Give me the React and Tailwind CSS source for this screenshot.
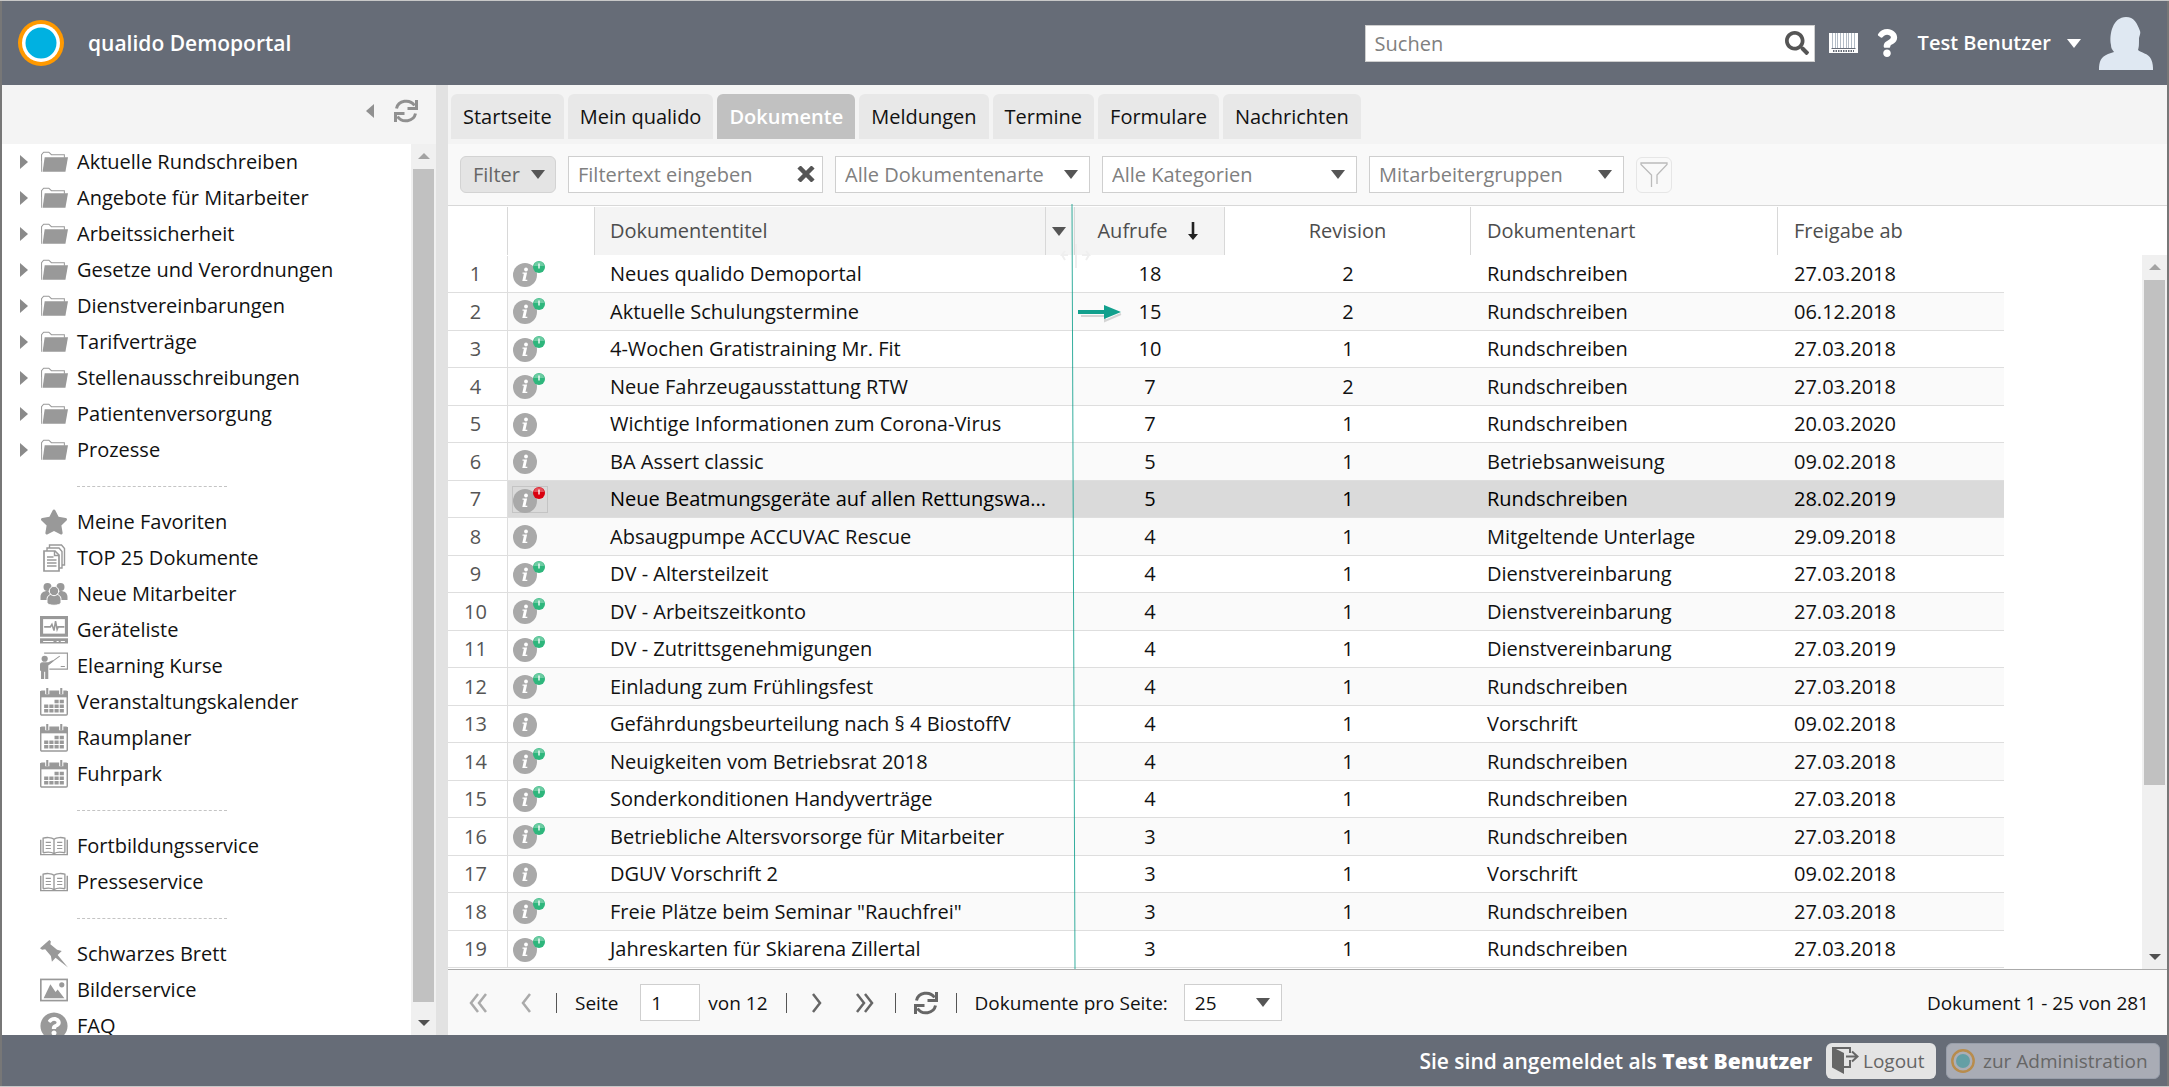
import { useState } from "react";
import { FaSearch, FaQuestion, FaStar, FaQuestionCircle } from "react-icons/fa";

const folders = [
  "Aktuelle Rundschreiben",
  "Angebote für Mitarbeiter",
  "Arbeitssicherheit",
  "Gesetze und Verordnungen",
  "Dienstvereinbarungen",
  "Tarifverträge",
  "Stellenausschreibungen",
  "Patientenversorgung",
  "Prozesse",
];

const linkGroups = [
  [
    { label: "Meine Favoriten", icon: StarIcon },
    { label: "TOP 25 Dokumente", icon: PagesIcon },
    { label: "Neue Mitarbeiter", icon: PeopleIcon },
    { label: "Geräteliste", icon: DeviceIcon },
    { label: "Elearning Kurse", icon: TeacherIcon },
    { label: "Veranstaltungskalender", icon: CalendarIcon },
    { label: "Raumplaner", icon: CalendarIcon },
    { label: "Fuhrpark", icon: CalendarIcon },
  ],
  [
    { label: "Fortbildungsservice", icon: BookIcon },
    { label: "Presseservice", icon: BookIcon },
  ],
  [
    { label: "Schwarzes Brett", icon: PinIcon },
    { label: "Bilderservice", icon: ImageIcon },
    { label: "FAQ", icon: FaqIcon },
  ],
];

const tabs = ["Startseite", "Mein qualido", "Dokumente", "Meldungen", "Termine", "Formulare", "Nachrichten"];

// title, views, revision, type, release date, badge
const documents = [
  ["Neues qualido Demoportal", 18, 2, "Rundschreiben", "27.03.2018", "green"],
  ["Aktuelle Schulungstermine", 15, 2, "Rundschreiben", "06.12.2018", "green"],
  ["4-Wochen Gratistraining Mr. Fit", 10, 1, "Rundschreiben", "27.03.2018", "green"],
  ["Neue Fahrzeugausstattung RTW", 7, 2, "Rundschreiben", "27.03.2018", "green"],
  ["Wichtige Informationen zum Corona-Virus", 7, 1, "Rundschreiben", "20.03.2020", null],
  ["BA Assert classic", 5, 1, "Betriebsanweisung", "09.02.2018", null],
  ["Neue Beatmungsgeräte auf allen Rettungswa...", 5, 1, "Rundschreiben", "28.02.2019", "red"],
  ["Absaugpumpe ACCUVAC Rescue", 4, 1, "Mitgeltende Unterlage", "29.09.2018", null],
  ["DV - Altersteilzeit", 4, 1, "Dienstvereinbarung", "27.03.2018", "green"],
  ["DV - Arbeitszeitkonto", 4, 1, "Dienstvereinbarung", "27.03.2018", "green"],
  ["DV - Zutrittsgenehmigungen", 4, 1, "Dienstvereinbarung", "27.03.2019", "green"],
  ["Einladung zum Frühlingsfest", 4, 1, "Rundschreiben", "27.03.2018", "green"],
  ["Gefährdungsbeurteilung nach § 4 BiostoffV", 4, 1, "Vorschrift", "09.02.2018", null],
  ["Neuigkeiten vom Betriebsrat 2018", 4, 1, "Rundschreiben", "27.03.2018", "green"],
  ["Sonderkonditionen Handyverträge", 4, 1, "Rundschreiben", "27.03.2018", "green"],
  ["Betriebliche Altersvorsorge für Mitarbeiter", 3, 1, "Rundschreiben", "27.03.2018", "green"],
  ["DGUV Vorschrift 2", 3, 1, "Vorschrift", "09.02.2018", null],
  ["Freie Plätze beim Seminar \"Rauchfrei\"", 3, 1, "Rundschreiben", "27.03.2018", "green"],
  ["Jahreskarten für Skiarena Zillertal", 3, 1, "Rundschreiben", "27.03.2018", "green"],
];

function StarIcon() {
  return <FaStar className="w-7 h-7" />;
}

function FaqIcon() {
  return <FaQuestionCircle className="w-7 h-7" />;
}

function FolderIcon() {
  return (
    <svg viewBox="0 0 27 22" className="w-7 h-6" fill="none">
      <path d="M1.5 19V4l2-2.5h5L11 4h12.5v3" stroke="#999" />
      <path d="M4.5 6.5H27L24.500 20.500H2.500z" fill="#999" />
      <path d="M1.500 20.500V10" stroke="#aaa" />
    </svg>
  );
}

function PagesIcon() {
  return (
    <svg viewBox="0 0 27 28" className="w-7 h-7" fill="#fff" stroke="#999" strokeWidth="1.4">
      <path d="M9 1h12l3 3.500V21H9z" />
      <path d="M6.500 4h12l3 3.500V24h-15z" />
      <path d="M3.500 7h11l4 4v16h-15z" strokeWidth="1.700" />
      <path d="M14 7v4.500h4.500M6.500 13H13M6.500 16h9.500M6.500 19h9.500M6.500 22h9.500" fill="none" />
    </svg>
  );
}

function PeopleIcon() {
  return (
    <svg viewBox="0 0 27 24" className="w-7 h-6" fill="currentColor">
      <circle cx="7" cy="5" r="4" />
      <circle cx="20" cy="5" r="4" />
      <path d="M0 18v-3c0-4 3-6 7-6s4 9 4 9zM27 18v-3c0-4-3-6-7-6s-4 9-4 9z" />
      <g stroke="#fff" strokeWidth="1">
        <path d="M6.500 21v-3.500c0-4 3-5.500 7-5.500s7 1.500 7 5.500V21c-2 3-12 3-14 0z" />
        <circle cx="13.500" cy="9" r="4.700" />
      </g>
    </svg>
  );
}

function DeviceIcon() {
  return (
    <svg viewBox="0 0 27 27" className="w-7 h-7" fill="none" stroke="currentColor">
      <rect x="1.500" y="1.500" width="24" height="17" strokeWidth="3" />
      <path d="M4 10.500h6l1.500-2.500 2 6L15 5l1.500 8 1-2.500h6" strokeWidth="1.500" />
      <path d="M0 21.500h27v5H0z" fill="currentColor" stroke="none" />
      <path d="M3 24.500h10M16 24.500h2M20 24.500h4" stroke="#fff" />
    </svg>
  );
}

function TeacherIcon() {
  return (
    <svg viewBox="0 0 27 27" className="w-7 h-7" fill="none" stroke="currentColor">
      <path d="M4 1h22.500v15.500H9" strokeWidth="1.200" />
      <path d="M20 14h4M8 12l11-8" />
      <circle cx="4.500" cy="6.500" r="3" fill="currentColor" stroke="none" />
      <path d="M0 12c0-2 2-2 4-2h4l4-2 1 1-5 4v13H5v-7H4v7H1v-8H0z" fill="currentColor" stroke="none" />
    </svg>
  );
}

function CalendarIcon() {
  return (
    <svg viewBox="0 0 27 27" className="w-7 h-7" fill="none">
      <rect x="0.700" y="3" width="25.600" height="23" rx="1" stroke="#999" strokeWidth="1.400" />
      <path d="M0 3h27v6H0z" fill="#999" />
      <path d="M7 0v6M20.500 0v6" stroke="#fff" strokeWidth="4" />
      <path d="M7 0v6M20.500 0v6" stroke="#999" strokeWidth="2" />
      <path d="M14 13h9.500" stroke="#999" strokeWidth="3.400" strokeDasharray="4 1" />
      <path d="M4 17.500h19.500M4 22h19.500" stroke="#999" strokeWidth="3.400" strokeDasharray="4 1" />
    </svg>
  );
}

function BookIcon() {
  return (
    <svg viewBox="0 0 27 18" className="w-7 h-5" fill="none" stroke="#999">
      <path d="M0.700 3v14.300h25.600V3" strokeWidth="1.400" />
      <path d="M3 15.500V1.500c3-1 8-1 10.500 1C16 .5 21 .5 24 1.500v14M13.500 2.500v14M3 15.500c4-.8 8-.8 10.500.8 2.500-1.600 6.500-1.600 10.500-.8" strokeWidth="1.300" />
      <path d="M5.500 5.500h5M5.500 8.500h5M5.500 11.500h5M16.500 5.500h5M16.500 8.500h5M16.500 11.500h5" />
    </svg>
  );
}

function PinIcon() {
  return (
    <svg viewBox="0 0 27 27" className="w-7 h-7" fill="currentColor">
      <path d="M9 0l1.500 1.500L10 4l6.500 5.500 4.500 1-4 4L27 26.500 15 17l-3.500 4-1-5.500L5 9 2 9.500 0 8z" />
    </svg>
  );
}

function ImageIcon() {
  return (
    <svg viewBox="0 0 27 22" className="w-7 h-6" fill="currentColor">
      <rect x="0.800" y="0.800" width="25.400" height="20.400" fill="none" stroke="currentColor" strokeWidth="1.600" />
      <path d="M3.500 19L10 5.500l5 7.500 2-2.500 6.500 8.500z" />
      <circle cx="21" cy="6" r="2.500" />
    </svg>
  );
}

function RefreshIcon() {
  return (
    <svg viewBox="0 0 24 24" className="w-6 h-6" fill="none" stroke="currentColor" strokeWidth="3">
      <path d="M2.500 9.500A9.800 9 0 0 1 20.500 6.500" />
      <path d="M22.500 1v8.500H13.500" />
      <path d="M21.500 14.500A9.800 9 0 0 1 3.500 17.500" />
      <path d="M1.500 23v-8.500H10.500" />
    </svg>
  );
}

function Caret() {
  return (
    <svg viewBox="0 0 14 9" className="w-3.5 h-2.25 shrink-0" fill="currentColor">
      <path d="M0 0h14L7 9z" />
    </svg>
  );
}

function Logo({ className }) {
  return (
    <svg viewBox="0 0 46 46" className={className}>
      <circle cx="23" cy="23" r="23" fill="#f90" />
      <circle cx="23" cy="23" r="19" fill="#fff" />
      <circle cx="23" cy="23" r="15.500" fill="#00b1e1" />
    </svg>
  );
}

function InfoIcon({ badge }) {
  const color = badge === "red" ? "#d9000f" : "#2eb67c";
  return (
    <svg viewBox="0 0 34 27" className="w-[34px] h-[27px]">
      <circle cx="12" cy="14" r="12" fill="#a9a9a9" />
      <circle cx="13" cy="8.500" r="1.900" fill="#fff" />
      <path d="M9.500 11.500h4.600l-1.600 7.300h1.800v1.200H9.300l1.600-7.300H9.500z" fill="#fff" />
      {badge && (
        <>
          <circle cx="26" cy="6" r="6" fill={color} />
          <path d="M21 5a5 4.500 0 0 1 10 0z" fill="#fff" opacity=".3" />
          <path d="M26 2.500v5" stroke="#fff" strokeWidth="1.500" opacity=".9" />
        </>
      )}
    </svg>
  );
}

// windows style scrollbar: buttons on both ends, thumb sized by class
function ScrollBar({ thumb }) {
  return (
    <div className="w-[25px] shrink-0 bg-[#f0f0f0] flex flex-col items-center justify-between">
      <div className="h-[25px] flex items-center justify-center text-[#a3a3a3] rotate-180"><Arrow /></div>
      <div className="flex-1 w-full px-0.5">
        <div className={"bg-[#c1c1c1] " + thumb}></div>
      </div>
      <div className="h-[25px] flex items-center justify-center text-[#505050]"><Arrow /></div>
    </div>
  );
}

function Arrow() {
  return (
    <svg viewBox="0 0 12 6" className="w-3 h-1.5" fill="currentColor">
      <path d="M0 0h12L6 6z" />
    </svg>
  );
}

function FilterSelect({ label }) {
  return (
    <div className="relative w-[255px]">
      <select aria-label={label} className="appearance-none w-full h-[37px] pl-[9px] pr-8 bg-white border border-[#cfcfcf] text-[#808080]">
        <option>{label}</option>
      </select>
      <span className="absolute right-3 top-3.5 text-[#555] pointer-events-none"><Caret /></span>
    </div>
  );
}

function Header() {
  return (
    <header className="h-[84px] shrink-0 bg-[#666c77] text-white flex items-center pl-4 pr-3.5">
      <Logo className="w-[46px] h-[46px]" />
      <h1 className="ml-6 text-[21px] font-semibold flex-1">qualido Demoportal</h1>
      <div className="relative w-[450px]">
        <input type="search" aria-label="Suchen" placeholder="Suchen" className="w-full h-[37px] pl-[9px] pr-10 bg-white border border-[#cfcfcf] text-[#333] placeholder:text-[#808080]" />
        <FaSearch className="absolute right-1.5 top-1.5 w-6 h-6 text-[#555]" />
      </div>
      <button aria-label="Barcode" className="ml-3.5">
        <svg viewBox="0 0 29 20" className="w-[29px] h-5">
          <path d="M0 0h29v20H0z" fill="#fff" />
          <path d="M3.500 0v15M6.500 0v15M8.500 0v15M11.500 0v15M14.500 0v15M17.500 0v15M19.500 0v15M22.500 0v15M25.500 0v15" stroke="#a9b4c0" strokeWidth="0.900" />
          <path d="M2.500 15h24v1h-24z" fill="#666c77" />
          <path d="M4 18h21" stroke="#666c77" strokeWidth="2" strokeDasharray="1.500 1" />
        </svg>
      </button>
      <button aria-label="Hilfe" className="ml-4"><FaQuestion className="w-[26px] h-7" /></button>
      <button className="ml-[18px] flex items-center gap-4 text-[20px] font-semibold">Test Benutzer <Caret /></button>
      <svg viewBox="0 0 54 53" className="ml-[18px] w-[54px] h-[53px]" fill="#dfe8f2">
        <path d="M0 53c0-9 2-13 9-16l6-2c-1-2-3-3-3-7C10 17 14 0 27 0c8 0 11 6 14 14 1 3-1 5-1 8 0 6 0 8-1 11 3 3 10 3 13 9 2 4 2 8 2 11z" />
      </svg>
    </header>
  );
}

function Sidebar() {
  return (
    <aside className="w-[434px] shrink-0 flex flex-col bg-white min-h-0">
      <div className="h-[59px] shrink-0 bg-[#f4f4f4] flex items-start justify-end gap-5 pt-3.5 pr-[18px] text-[#909090]">
        <button aria-label="Einklappen" className="h-6 flex items-center">
          <svg viewBox="0 0 8 14" className="w-2 h-3.5" fill="currentColor"><path d="M8 0v14L0 7z" /></svg>
        </button>
        <button aria-label="Aktualisieren" className="h-6"><RefreshIcon /></button>
      </div>
      <div className="flex-1 min-h-0 flex">
        <nav className="flex-1 overflow-hidden text-[#111]">
          {folders.map((name) => (
            <a href="#" key={name} className="flex items-center h-9 pl-[18px] text-[#999]">
              <svg viewBox="0 0 8 14" className="w-2 h-3.5 mr-3" fill="#8a8a8a"><path d="M0 0v14l8-7z" /></svg>
              <FolderIcon />
              <span className="ml-[9px] text-[#111]">{name}</span>
            </a>
          ))}
          {linkGroups.map((group, i) => (
            <div key={i}>
              <div className="h-9 flex items-center pl-[75px]">
                <div className="w-[150px] border-t border-dashed border-[#c4c4c4]"></div>
              </div>
              {group.map(({ label, icon: Icon }) => (
                <a href="#" key={label} className="flex items-center h-9 pl-[38px] text-[#999]">
                  <Icon />
                  <span className="ml-[9px] text-[#111]">{label}</span>
                </a>
              ))}
            </div>
          ))}
        </nav>
        <ScrollBar thumb="h-[99%]" />
      </div>
    </aside>
  );
}

function FilterBar() {
  return (
    <div className="h-[62px] shrink-0 bg-[#f9f9f9] border-b border-[#d8d8d8] flex items-center pl-3 gap-3 text-[#808080]">
      <button className="h-[37px] w-[96px] rounded-md border border-[#d3d3d3] bg-[#e4e4e4] text-[#666] flex items-center justify-between pl-3 pr-2.5">
        Filter <span className="text-[#555]"><Caret /></span>
      </button>
      <div className="relative w-[255px]">
        <input type="text" aria-label="Filtertext" placeholder="Filtertext eingeben" className="w-full h-[37px] px-[9px] bg-white border border-[#cfcfcf] placeholder:text-[#808080]" />
        <button aria-label="Filtertext löschen" className="absolute right-2 top-2.5 text-[#555]">
          <svg viewBox="0 0 18 16" className="w-[18px] h-4" stroke="currentColor" strokeWidth="4.500"><path d="M2 1l14 14M16 1L2 15" /></svg>
        </button>
      </div>
      <FilterSelect label="Alle Dokumentenarte" />
      <FilterSelect label="Alle Kategorien" />
      <FilterSelect label="Mitarbeitergruppen" />
      <button aria-label="Filter zurücksetzen" className="w-9 h-9 rounded-md border border-[#e6e6e6] flex items-center justify-center">
        <svg viewBox="0 0 28 26" className="w-7 h-[26px]" fill="none" stroke="#bbb" strokeWidth="1.300">
          <path d="M11.500 25V13L1 2.500V1h26v1.500L17 13v9" />
        </svg>
      </button>
    </div>
  );
}

function DocumentTable() {
  const [selected, setSelected] = useState(6);
  const head = "h-12 font-normal text-left border-r border-[#d8d8d8]";
  return (
    <div className="relative flex-1 min-h-0 pt-px flex flex-col bg-white">
      <div className="flex-1 min-h-0 flex">
        <div className="flex-1 overflow-hidden">
          <table className="table-fixed w-[1556px] border-separate border-spacing-0">
            <thead className="text-[#4d4d4d]">
              <tr>
                <th className={head + " w-[60px]"}></th>
                <th className={head + " w-[87px]"}></th>
                <th className={head + " w-[480px] bg-[#f4f4f4]"}>
                  <div className="flex h-full items-center">
                    <span className="flex-1 pl-[15px]">Dokumententitel</span>
                    <button aria-label="Spaltenmenü" className="h-full w-[29px] border-l border-[#d8d8d8] pl-1.5 text-[#555]"><Caret /></button>
                  </div>
                </th>
                <th className={head + " w-[150px] bg-[#f4f4f4]"}>
                  <div className="flex items-center justify-center gap-5 pr-1">
                    Aufrufe
                    <svg viewBox="0 0 10 18" className="w-2.5 h-[18px]" fill="#222"><path d="M3.700 0h2.600v12H10l-5 6-5-6h3.700z" /></svg>
                  </div>
                </th>
                <th className={head + " w-[246px]"}><div className="text-center">Revision</div></th>
                <th className={head + " w-[307px] pl-4"}>Dokumentenart</th>
                <th className="font-normal text-left pl-4">Freigabe ab</th>
              </tr>
            </thead>
            <tbody className="text-[#111]">
              <tr className="h-px"><td colSpan={7}></td></tr>
              {documents.map(([title, views, revision, type, date, badge], i) => {
                const active = i === selected;
                const cell = "border-b border-[#dedede] " + (active ? "bg-[#dadada] text-black" : i % 2 ? "bg-[#fafafa]" : "bg-white");
                return (
                  <tr key={title} className={i % 2 ? "h-[38px]" : "h-[37px]"} onClick={() => setSelected(i)}>
                    <td className="border-b border-r border-[#dedede] text-center pr-1 text-[#555]">{i + 1}</td>
                    <td className={cell + " pl-1"}>
                      <div className={active ? "w-9 h-[27px] border border-[#c4c4c4]" : "w-9 h-[27px] pl-px"}>
                        <InfoIcon badge={badge} />
                      </div>
                    </td>
                    <td className={cell + " pl-[15px] whitespace-nowrap overflow-hidden"}>{title}</td>
                    <td className={cell + " text-center"}>{views}</td>
                    <td className={cell + " text-center"}>{revision}</td>
                    <td className={cell + " pl-4"}>{type}</td>
                    <td className={cell + " pl-4"}>{date}</td>
                  </tr>
                );
              })}
            </tbody>
          </table>
        </div>
        <div className="flex pt-12">
          <ScrollBar thumb="h-[76%]" />
        </div>
      </div>

      {/* drag guide of the title column */}
      <svg viewBox="0 0 66 765" className="absolute left-[610px] -top-0.5 w-[66px] h-[765px] pointer-events-none" fill="none">
        <path d="M14 0L17 765" stroke="#12a08d" strokeWidth="1" opacity=".85" />
        <path d="M18 40v24M10 51H4l3-4M4 51l3 5M24 51h7l-3-4M31 51l-3 5" stroke="#efefef" strokeWidth="2" />
        <path d="M23 112h24v5l16-7" stroke="#000" strokeWidth="2" opacity=".15" />
        <path d="M20 106h26v-5l17 7-17 7v-5H20z" fill="#12a08d" />
      </svg>
    </div>
  );
}

function Chevron({ left, double }) {
  return (
    <svg viewBox="0 0 20 20" className={left ? "w-5 h-5 rotate-180" : "w-5 h-5"} fill="none" stroke="currentColor" strokeWidth="2.500">
      {double ? <path d="M2 1l7 9-7 9M10 1l7 9-7 9" /> : <path d="M6 1l7 9-7 9" />}
    </svg>
  );
}

function Pager() {
  return (
    <div className="h-[66px] shrink-0 border-t border-[#aaa] bg-[#f9f9f9] flex items-center pl-5 pr-[18px] text-[19px] text-[#111]">
      <button aria-label="Erste Seite" className="text-[#aaa]"><Chevron left double /></button>
      <button aria-label="Vorherige Seite" className="ml-7 text-[#aaa]"><Chevron left /></button>
      <span className="ml-5 h-5 border-l border-[#555]"></span>
      <label htmlFor="page" className="ml-[18px]">Seite</label>
      <input id="page" type="text" defaultValue="1" className="ml-[22px] w-[60px] h-[37px] px-2.5 bg-white border border-[#cfcfcf]" />
      <span className="ml-2">von 12</span>
      <span className="ml-[18px] h-5 border-l border-[#555]"></span>
      <button aria-label="Nächste Seite" className="ml-5 text-[#666]"><Chevron /></button>
      <button aria-label="Letzte Seite" className="ml-7 text-[#666]"><Chevron double /></button>
      <span className="ml-5 h-5 border-l border-[#555]"></span>
      <button aria-label="Neu laden" className="ml-[18px] text-[#666]"><RefreshIcon /></button>
      <span className="ml-[18px] h-5 border-l border-[#555]"></span>
      <label htmlFor="size" className="ml-[18px]">Dokumente pro Seite:</label>
      <div className="relative ml-4 w-[98px]">
        <select id="size" className="appearance-none w-full h-[37px] pl-2.5 bg-white border border-[#cfcfcf]">
          <option>25</option>
          <option>50</option>
        </select>
        <span className="absolute right-3 top-3.5 text-[#555] pointer-events-none"><Caret /></span>
      </div>
      <span className="ml-auto">Dokument 1 - 25 von 281</span>
    </div>
  );
}

function Footer() {
  return (
    <footer className="h-[51px] shrink-0 bg-[#666c77] flex items-center justify-end pr-[7px] gap-2.5 text-[19px] text-[#666]">
      <p className="mr-1 text-[21px] font-semibold text-white">Sie sind angemeldet als <b>Test Benutzer</b></p>
      <button className="h-9 w-[110px] rounded-md bg-[#e4e4e4] flex items-center pl-1.5 gap-1">
        <svg viewBox="0 0 27 27" className="w-[27px] h-[27px]" fill="none" stroke="#666" strokeWidth="2">
          <path d="M0 0l12 6v21L0 20.500z" fill="#666" stroke="none" />
          <path d="M0 1h18v5M18 13v7h-6" />
          <path d="M14 9.500h11M20 4.500l5.500 5-5.500 5" />
        </svg>
        Logout
      </button>
      <button className="h-9 w-[214px] rounded-md border border-[#989eaa] bg-[#a9acb5] flex items-center pl-1 gap-2">
        <svg viewBox="0 0 24 24" className="w-6 h-6">
          <circle cx="12" cy="12" r="10.700" fill="#acaeb6" stroke="#b88c4c" strokeWidth="2.400" />
          <circle cx="12" cy="12" r="7" fill="#649fa5" />
        </svg>
        zur Administration
      </button>
    </footer>
  );
}

export default function App() {
  const [activeTab, setActiveTab] = useState("Dokumente");

  return (
    <div className="h-screen flex flex-col border-t border-b border-[#c8c8c8] bg-white text-[20px] leading-6 font-['Open_Sans',sans-serif]">
      <div className="flex-1 min-h-0 flex flex-col border-x-2 border-[#777]">
        <Header />
        <div className="flex-1 min-h-0 flex">
          <Sidebar />
          <div className="w-3 shrink-0 bg-[#e2e2e2]"></div>
          <main className="flex-1 min-w-0 flex flex-col">
            <div role="tablist" className="h-[59px] shrink-0 bg-[#f4f4f4] flex items-start gap-1 pl-[3px] pt-[9px]">
              {tabs.map((tab) => (
                <button
                  key={tab}
                  role="tab"
                  aria-selected={tab === activeTab}
                  onClick={() => setActiveTab(tab)}
                  className={
                    "h-[45px] px-3 rounded-t-md " +
                    (tab === activeTab ? "bg-[#c1c1c1] text-white font-semibold" : "bg-[#e8e8e8] text-[#111]")
                  }
                >
                  {tab}
                </button>
              ))}
            </div>
            <FilterBar />
            <DocumentTable />
            <Pager />
          </main>
        </div>
        <Footer />
      </div>
    </div>
  );
}
